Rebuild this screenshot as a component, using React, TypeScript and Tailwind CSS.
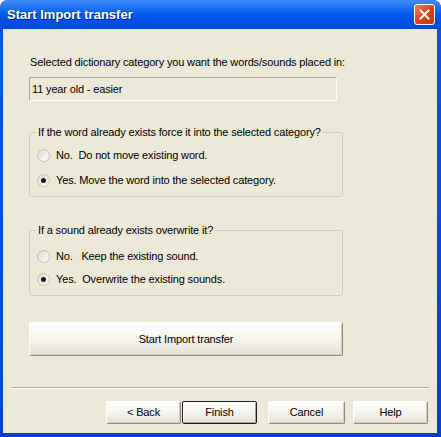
function Radio({ checked, label }: { checked?: boolean; label: string }) {
  return (
    <div className="flex items-center h-[13px] leading-[13px]">
      <span className="w-[13px] h-[13px] rounded-full border border-[#C4C1B4] bg-gradient-to-br from-[#DCD9CF] to-white flex items-center justify-center shrink-0">
        {checked && <span className="w-[5px] h-[5px] rounded-full bg-[#1A1A1A]" />}
      </span>
      <span className="ml-[6px] whitespace-pre">{label}</span>
    </div>
  )
}

function Button({ label, def, className }: { label: string; def?: boolean; className?: string }) {
  return (
    <div
      className={`h-[23px] flex items-center justify-center rounded-[2px] bg-gradient-to-b from-white via-[#F5F4EF] to-[#E4E1D5] ${
        def
          ? 'border border-[#1E1E1E] shadow-[inset_1px_1px_0_#fff,inset_-1px_-1px_0_#ACA899]'
          : 'border border-t-white border-l-white border-b-[#8E8B7E] border-r-[#8E8B7E] shadow-[inset_-1px_-1px_0_#D4D0C2]'
      } ${className ?? ''}`}
    >
      {label}
    </div>
  )
}

function Group({ title, children, className }: { title: string; children: React.ReactNode; className?: string }) {
  return (
    <div className={`relative ml-[26px] w-[314px] border border-[#D0D0BF] rounded-[3px] ${className ?? ''}`}>
      <span className="absolute -top-[7px] left-[6px] px-[2px] bg-[#ECE9D8] leading-[13px] whitespace-nowrap">{title}</span>
      {children}
    </div>
  )
}

export default function App() {
  return (
    <div className="w-[441px] h-[437px] flex flex-col rounded-t-[8px] overflow-hidden bg-gradient-to-b from-[#0058EE] to-[#0040D0] font-['Tahoma','Liberation_Sans',sans-serif] text-[11px] tracking-[-0.15px] text-black">
      {/* title bar */}
      <div className="h-[29px] shrink-0 flex items-center pl-[7px] pr-[6px] bg-gradient-to-b from-[#3D8BF8] via-[#0058EE] to-[#0047DA]">
        <span className="text-white font-bold text-[13px] tracking-normal font-['Liberation_Sans',sans-serif] [text-shadow:1px_1px_0_#0A1E6E]">
          Start Import transfer
        </span>
        <div className="ml-auto w-[21px] h-[21px] rounded-[3px] border border-white bg-gradient-to-br from-[#E9805F] via-[#D9461C] to-[#C13A10] flex items-center justify-center">
          <svg width="11" height="11" viewBox="0 0 11 11">
            <path d="M1.5 1.5 L9.5 9.5 M9.5 1.5 L1.5 9.5" stroke="white" strokeWidth="2" strokeLinecap="square" />
          </svg>
        </div>
      </div>

      {/* client area */}
      <div className="flex-1 ml-[3px] mr-[4px] mb-[4px] bg-[#ECE9D8] flex flex-col">
        <div className="mt-[27px] ml-[27px] leading-[13px]">
          Selected dictionary category you want the words/sounds placed in:
        </div>
        <div className="mt-[8px] ml-[26px] w-[308px] h-[24px] border border-t-[#ACA899] border-l-[#ACA899] border-b-white border-r-white flex items-center pl-[2px] leading-[13px]">
          11 year old - easier
        </div>

        <Group title="If the word already exists force it into the selected category?" className="mt-[31px] h-[65px]">
          <div className="pt-[16px] pl-[7px] flex flex-col gap-[12px]">
            <Radio label="No.  Do not move existing word." />
            <Radio checked label="Yes. Move the word into the selected category." />
          </div>
        </Group>

        <Group title="If a sound already exists overwrite it?" className="mt-[33px] h-[66px]">
          <div className="pt-[19px] pl-[7px] flex flex-col gap-[10px]">
            <Radio label="No.   Keep the existing sound." />
            <Radio checked label="Yes.  Overwrite the existing sounds." />
          </div>
        </Group>

        <Button label="Start Import transfer" className="mt-[26px] ml-[26px] w-[314px] h-[34px]" />

        <div className="mt-[31px] ml-[9px] w-[417px] h-[2px] border-t border-t-[#ACA899] border-b border-b-white" />

        <div className="mt-[12px] flex">
          <Button label="< Back" className="ml-[103px] w-[75px]" />
          <Button label="Finish" def className="ml-[1px] w-[75px]" />
          <Button label="Cancel" className="ml-[11px] w-[77px]" />
          <Button label="Help" className="ml-[8px] w-[75px]" />
        </div>
      </div>
    </div>
  )
}
